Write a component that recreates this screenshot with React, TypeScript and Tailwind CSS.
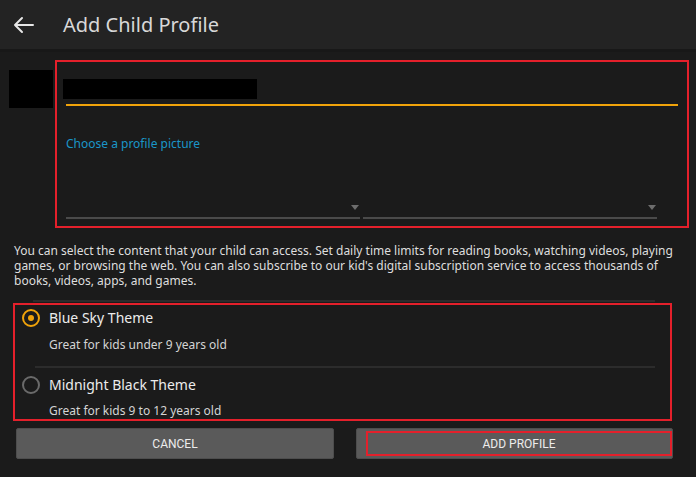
import React from "react"

const font = { fontFamily: '"Noto Sans", "Open Sans", sans-serif' }

function Dropdown({ className = "" }: { className?: string }) {
  return (
    <div className={`relative h-[18px] border-b-2 border-[#4a4a4a] ${className}`}>
      <span className="absolute right-[1px] top-[4px] h-0 w-0 border-x-[4px] border-t-[5px] border-x-transparent border-t-[#6d6d6d]" />
    </div>
  )
}

function Radio({ checked }: { checked?: boolean }) {
  return checked ? (
    <span className="flex h-[18px] w-[18px] shrink-0 items-center justify-center rounded-full border-2 border-[#f0a30a]">
      <span className="h-[6px] w-[6px] rounded-full bg-[#f0a30a]" />
    </span>
  ) : (
    <span className="block h-[18px] w-[18px] shrink-0 rounded-full border-2 border-[#6a6a6a]" />
  )
}

export default function App() {
  return (
    <div className="h-[477px] w-[696px] overflow-hidden bg-[#1b1b1b] text-[#dcdcdc]" style={font}>
      <header className="flex h-[52px] items-center bg-[#232323] border-b-[3px] border-[#181818]">
        <svg className="ml-[13px] mt-[1px]" width="22" height="18" viewBox="0 0 22 18" fill="none" stroke="#e6e6e6" strokeWidth="2" strokeLinecap="round" strokeLinejoin="round">
          <path d="M20 9H2M9 2L2 9l7 7" />
        </svg>
        <h1 className="ml-[28px] text-[20px] font-normal text-[#d8d8d8]">Add Child Profile</h1>
      </header>

      <div className="flex pt-[8px]">
        <div className="ml-[9px] mt-[10px] h-[38px] w-[44px] bg-black" />
        <div className="ml-[2px] h-[168px] w-[634px] border-2 border-[#e4202b]">
          <div className="ml-[6px] mt-[17px] h-[20px] w-[194px] bg-black" />
          <div className="ml-[9px] mt-[5px] h-[2px] w-[612px] bg-[#f0a30a]" />
          <p className="ml-[9px] mt-[30px] text-[12px] leading-[16px] text-[#1a96c8]">Choose a profile picture</p>
          <div className="ml-[9px] mt-[49px] flex gap-[3px]">
            <Dropdown className="w-[294px]" />
            <Dropdown className="w-[294px]" />
          </div>
        </div>
      </div>

      <p className="mt-[15px] px-[14px] text-[12px] leading-[15px] text-[#dedede]">
        You can select the content that your child can access. Set daily time limits for reading books, watching videos, playing games, or browsing the web. You can also subscribe to our kid's digital subscription service to access thousands of books, videos, apps, and games.
      </p>

      <div className="ml-[33px] mt-[12px] h-[2px] w-[622px] bg-[#2c2c2c]" />

      <div className="ml-[13px] mt-[1px] h-[118px] w-[659px] border-2 border-[#e4202b]">
        <div className="flex h-[61px] flex-col">
          <div className="mt-[3px] flex items-center">
            <span className="ml-[7px]"><Radio checked /></span>
            <span className="ml-[9px] text-[14px] leading-[20px] text-[#ececec]">Blue Sky Theme</span>
          </div>
          <p className="ml-[34px] mt-[9px] text-[12px] leading-[16px] text-[#d4d4d4]">Great for kids under 9 years old</p>
        </div>
        <div className="ml-[20px] h-[2px] w-[620px] bg-[#2c2c2c]" />
        <div className="flex flex-col">
          <div className="mt-[7px] flex items-center">
            <span className="ml-[7px]"><Radio /></span>
            <span className="ml-[9px] text-[14px] leading-[20px] text-[#ececec]">Midnight Black Theme</span>
          </div>
          <p className="ml-[34px] mt-[8px] text-[12px] leading-[16px] text-[#d4d4d4]">Great for kids 9 to 12 years old</p>
        </div>
      </div>

      <div className="mt-[7px] flex gap-[22px] pl-[16px]">
        <button className="h-[31px] w-[318px] rounded-[2px] border border-[#4d4d4d] bg-[#5a5a5a] text-[12px] text-[#ececec]" style={{ fontFamily: '"Roboto", sans-serif' }}>
          CANCEL
        </button>
        <button className="flex h-[31px] w-[317px] items-center justify-center rounded-[2px] border border-[#4d4d4d] bg-[#5a5a5a]" style={{ fontFamily: '"Roboto", sans-serif' }}>
          <span className="ml-[9px] flex h-[25px] w-[306px] items-center justify-center border-2 border-[#e4202b] text-[12px] text-[#ececec]">ADD PROFILE</span>
        </button>
      </div>
    </div>
  )
}
